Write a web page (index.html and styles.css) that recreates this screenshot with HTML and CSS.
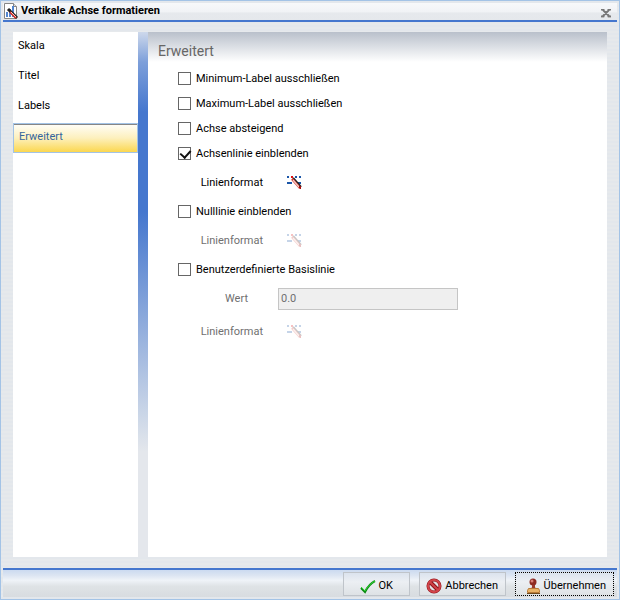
FILE: index.html
```html
<!DOCTYPE html>
<html lang="de">
<head>
<meta charset="utf-8">
<meta name="viewport" content="width=device-width, initial-scale=1">
<title>Vertikale Achse formatieren</title>
<link rel="stylesheet" href="styles.css">
</head>
<body>
<svg width="0" height="0" class="sprite" aria-hidden="true">
  <symbol id="line-format" viewBox="0 0 16 16">
    <path d="M1 1h2v2H1zM9 1h2v2H9zM13 1h2v2h-2zM1 7h5v2H1zM11 7h4v2h-4z" fill="#1b56a8"/>
    <path d="M7 3L15 12" stroke="#222" stroke-width="2"/>
    <path d="M6 4L14 13" stroke="#d63a30" stroke-width="2.500"/>
    <path d="M7 5L13 12" stroke="#f5cdc8" stroke-width="1.200"/>
    <path d="M5 1h2v2H5z" fill="#e01010"/>
    <path d="M13 11h2v3h-1l-1-1z" fill="#a80d0d"/>
  </symbol>
</svg>
<div class="dialog" role="dialog" aria-labelledby="dialog-title">
  <header class="titlebar">
    <svg class="title-icon" viewBox="0 0 16 16" aria-hidden="true">
      <path d="M1.500.500h9l3 3v12h-12z" fill="#fff" stroke="#868686"/>
      <path d="M10.500.500v3h3" fill="#ddd" stroke="#868686"/>
      <path d="M3 9h2v5H3zM6 6h2v8H6zM9 3h2v11H9z" fill="#5285cf"/>
      <path d="M5 6L14 15" stroke="#222" stroke-width="3"/>
      <path d="M7 9L13 15" stroke="#d6352d" stroke-width="2"/>
      <path d="M8 9L13 14" stroke="#f7c4be" stroke-width="1"/>
    </svg>
    <h1 id="dialog-title">Vertikale Achse formatieren</h1>
    <button class="close" type="button" aria-label="Schließen">
      <svg viewBox="0 0 10 9" aria-hidden="true"><path d="M0 8.500h4M6 8.500h4" stroke="#fff"/><path d="M0 .500h3.500M6.500.500h3.500M0 7.500h3.500M6.500 7.500h3.500M2 1l6 6M8 1L2 7" fill="none" stroke="#777" stroke-width="2"/></svg>
    </button>
  </header>
  <div class="content">
    <nav class="tabs">
      <a href="#skala">Skala</a>
      <a href="#titel">Titel</a>
      <a href="#labels">Labels</a>
      <a href="#erweitert" class="active" aria-current="page">Erweitert</a>
    </nav>
    <div class="strip"></div>
    <main class="panel" id="erweitert">
      <h2>Erweitert</h2>
      <div class="options">
        <label class="check"><input type="checkbox">Minimum-Label ausschließen</label>
        <label class="check"><input type="checkbox">Maximum-Label ausschließen</label>
        <label class="check"><input type="checkbox">Achse absteigend</label>
        <label class="check"><input type="checkbox" checked>Achsenlinie einblenden</label>
        <div class="field">
          <label for="axis-line">Linienformat</label>
          <button class="format" id="axis-line" type="button"><svg aria-hidden="true"><use href="#line-format"/></svg></button>
        </div>
        <label class="check"><input type="checkbox">Nulllinie einblenden</label>
        <div class="field off">
          <label for="zero-line">Linienformat</label>
          <button class="format" id="zero-line" type="button" disabled><svg aria-hidden="true"><use href="#line-format"/></svg></button>
        </div>
        <label class="check"><input type="checkbox">Benutzerdefinierte Basislinie</label>
        <div class="field value off">
          <label for="base-value">Wert</label>
          <input class="text" id="base-value" type="text" value="0.0" disabled>
        </div>
        <div class="field off">
          <label for="base-line">Linienformat</label>
          <button class="format" id="base-line" type="button" disabled><svg aria-hidden="true"><use href="#line-format"/></svg></button>
        </div>
      </div>
    </main>
  </div>
  <footer class="actions">
    <button class="action ok" type="button">
      <svg viewBox="0 0 16 16" aria-hidden="true"><path d="M1 10l4 4C7 10 11 5 15 3" fill="none" stroke="#0b8a12" stroke-width="2"/><path d="M1 9l4 4C7 9 11 5 15 3" fill="none" stroke="#2fd032" stroke-width="1"/></svg>
      OK
    </button>
    <button class="action" type="button">
      <svg viewBox="0 0 16 16" aria-hidden="true"><circle cx="8" cy="8" r="6" fill="#e4e3e6" stroke="#8d1218" stroke-width="3"/><path d="M4 4l8 8" stroke="#8d1218" stroke-width="4"/><circle cx="8" cy="8" r="6" fill="none" stroke="#d2444a" stroke-width="2"/><path d="M4 4l8 8" stroke="#d2444a" stroke-width="2"/></svg>
      Abbrechen
    </button>
    <button class="action apply" type="button">
      <svg viewBox="0 0 16 16" aria-hidden="true"><circle cx="8" cy="4" r="3.500" fill="#8e2a22"/><circle cx="7" cy="3" r="1.500" fill="#d98078"/><path d="M7 7h3v2l1 2H6l1-2z" fill="#9c3a2c"/><path d="M3.500 10.500h10l1 2v2h-12v-2z" fill="#e9b266" stroke="#b87a38"/><path d="M2 15.500h13" stroke="#6e4b20"/></svg>
      Übernehmen
    </button>
  </footer>
</div>
</body>
</html>
```

FILE: styles.css
```css
* { box-sizing: border-box; }

body {
  margin: 0;
  font: 11px/16px Roboto, Tahoma, sans-serif;
  color: #000;
}

button, input { font: inherit; color: inherit; margin: 0; }

.sprite { position: absolute; }

.dialog {
  display: flex;
  flex-direction: column;
  min-height: 100vh;
  padding: 2px;
  border: 1px solid #a3c3e6;
  background: repeating-linear-gradient(#e3e7ec 0 2px, #e6e9ec 2px 4px);
}

.titlebar {
  display: flex;
  align-items: flex-start;
  height: 19px;
  border-bottom: 2px solid #4577ce;
  background: linear-gradient(#f7f8fa, #f1f3f6 50%, #e6e9ed 60%, #e5e8ec);
}

.title-icon { width: 16px; height: 16px; margin-right: 2px; }

h1 { flex: 1; margin: 0; font-size: 11px; line-height: 16px; }

.close {
  display: flex;
  padding: 6px 6px 0;
  border: 0;
  background: none;
}

.close svg { width: 10px; height: 9px; }

.content {
  flex: 1;
  display: flex;
  padding: 10px 10px 11px;
}

.tabs {
  flex: 0 0 125px;
  padding-top: 1px;
  background: #fff;
}

.tabs a {
  display: block;
  height: 30px;
  padding: 5px;
  color: #000;
  text-decoration: none;
}

.tabs .active {
  border: 1px solid #a3c3e6;
  color: #35659c;
  background: linear-gradient(#fffefa, #fdf0bd 50%, #fbd750);
  box-shadow: inset 0 1px #868686;
}

.strip {
  flex: 0 0 10px;
  background: linear-gradient(#cdd8eb, #7d9fda 30px, #4577ce 80px, #4577ce 180px, #d3dce9 395px, #e4e7ec 420px);
}

.panel {
  flex: 1;
  padding: 10px;
  background: linear-gradient(#b9c0cb, #fff 30px);
}

h2 {
  margin: 0;
  font-size: 14px;
  font-weight: normal;
  line-height: 18px;
  color: #666;
}

.options { padding: 6px 20px; }

.check {
  display: flex;
  align-items: center;
  height: 25px;
}

.check input {
  appearance: none;
  width: 13px;
  height: 13px;
  margin-right: 5px;
  border: 1px solid #666;
  background: #fff;
  position: relative;
}

.check input:checked::after {
  content: "";
  position: absolute;
  left: 3px;
  top: 0;
  width: 5px;
  height: 8px;
  border: solid #111;
  border-width: 0 2px 2px 0;
  transform: rotate(42deg);
}

.field {
  display: flex;
  align-items: center;
  height: 33px;
}

.field label { width: 85px; text-align: right; }

.off { color: #707070; }

.format {
  display: flex;
  margin-left: 23px;
  padding: 0;
  border: 0;
  background: none;
}

.format svg { width: 16px; height: 16px; }
.format:disabled { opacity: 0.25; }

.value label { width: 70px; }

.text {
  width: 180px;
  height: 22px;
  margin-left: 30px;
  padding: 0 2px;
  border: 1px solid #c5c5c5;
  background: #efefef;
  color: #707070;
}

.actions {
  display: flex;
  justify-content: flex-end;
  gap: 9px;
  height: 29px;
  padding: 2px 3px 1px 0;
  border-top: 2px solid #4577ce;
  background: linear-gradient(#cbdaf0, #dce5f2 20%, #eff3f8 38%, #dfe3e6 60%, #d8dce0);
}

.action {
  display: flex;
  align-items: center;
  justify-content: flex-end;
  gap: 3px;
  min-width: 87px;
  padding: 3px 7px 0 5px;
  border: 1px solid #bfc4ca;
  background: linear-gradient(#dbe3ee, #eceff3 40%, #dee2e5);
}

.action svg { width: 16px; height: 16px; }
.ok { min-width: 67px; padding-right: 16px; }
.apply { min-width: 99px; outline: 1px dotted #000; outline-offset: -1px; border-color: #dee2e5; }
```
